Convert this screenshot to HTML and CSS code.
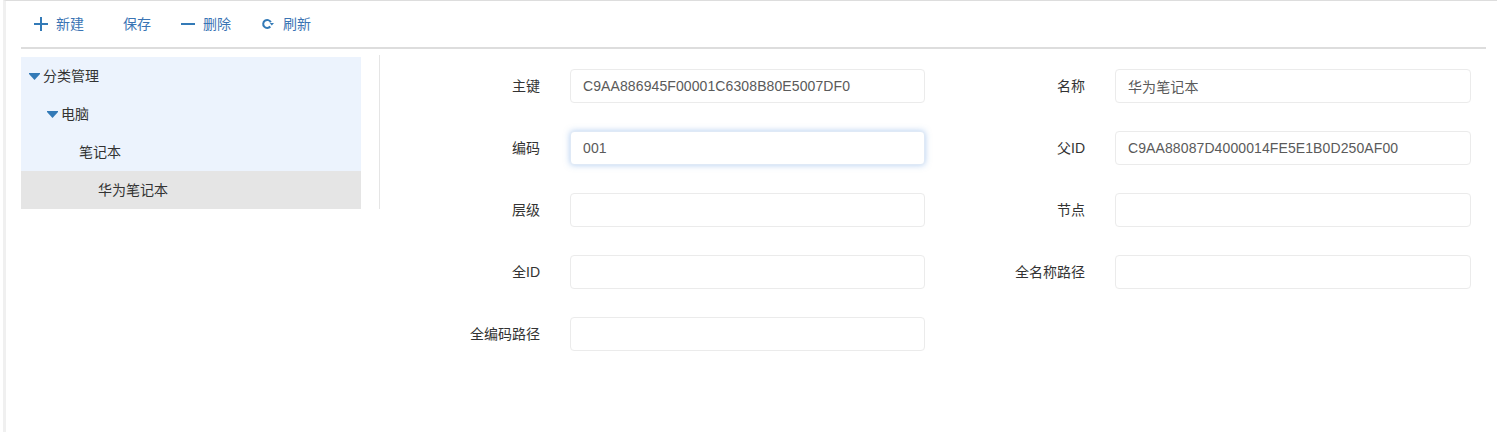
FILE: index.html
```html
<!DOCTYPE html>
<html lang="zh-CN">
<head>
<meta charset="utf-8">
<title>分类管理</title>
<link rel="stylesheet" href="styles.css">
</head>
<body>
<div class="frame">
  <div class="toolbar">
    <a class="tool tool-new"><svg class="ico" width="14" height="14" viewBox="0 0 14 14"><path d="M6 0h2v6h6v2H8v6H6V8H0V6h6z"/></svg><span>新建</span></a>
    <a class="tool tool-save"><span>保存</span></a>
    <a class="tool tool-del"><svg class="ico" width="14" height="14" viewBox="0 0 14 14"><path d="M0 6h14v2H0z"/></svg><span>删除</span></a>
    <a class="tool tool-ref"><svg class="ico" width="12" height="12" viewBox="0 0 12 12"><path class="ring" d="M8.800 4.200A4 4 0 1 0 8.300 8.500"/><path d="M7.700 5h4.300L9.800 7.500z"/></svg><span>刷新</span></a>
  </div>
  <div class="content">
    <div class="tree-pane">
      <ul class="tree">
        <li class="node open"><svg class="caret" width="11" height="7" viewBox="0 0 11 7"><path d="M0 0h11v1L5.500 7 0 1z"/></svg><span>分类管理</span></li>
        <li class="node open lvl1"><svg class="caret" width="11" height="7" viewBox="0 0 11 7"><path d="M0 0h11v1L5.500 7 0 1z"/></svg><span>电脑</span></li>
        <li class="node open lvl2"><span>笔记本</span></li>
        <li class="node selected lvl3"><span>华为笔记本</span></li>
      </ul>
    </div>
    <form class="form">
      <label class="lab">主键</label><input class="inp" value="C9AA886945F00001C6308B80E5007DF0">
      <label class="lab">名称</label><input class="inp" value="华为笔记本">
      <label class="lab">编码</label><input class="inp focus" value="001">
      <label class="lab">父ID</label><input class="inp" value="C9AA88087D4000014FE5E1B0D250AF00">
      <label class="lab">层级</label><input class="inp">
      <label class="lab">节点</label><input class="inp">
      <label class="lab">全ID</label><input class="inp">
      <label class="lab">全名称路径</label><input class="inp">
      <label class="lab">全编码路径</label><input class="inp">
    </form>
  </div>
</div>
</body>
</html>
```
FILE: styles.css
```css
* { box-sizing: border-box; }
html, body { margin: 0; height: 100%; background: #fff; overflow: hidden; }
body {
  padding-left: 3px;
  font: 14px/20px "Liberation Sans", "Noto Sans CJK SC", sans-serif;
  color: #333;
}
.frame {
  height: 432px;
  border-top: 1px solid #ddd;
  border-left: 3px solid #f0f0f0;
  padding: 0 11px 0 15px;
}
.toolbar {
  display: flex;
  align-items: center;
  height: 48px;
  padding-left: 13px;
  border-bottom: 2px solid #ddd;
}
.tool { display: flex; align-items: center; color: #3a74b4; }
.tool .ico { fill: #337ab7; margin-right: 8px; overflow: visible; }
.tool .ico .ring { fill: none; stroke: #337ab7; stroke-width: 2; }
.tool-new { width: 89px; }
.tool-save { width: 58px; }
.tool-del { width: 81px; }
.tool-ref .ico { margin-right: 9px; }
.content { display: flex; padding-top: 6px; }
.tree-pane {
  width: 359px;
  height: 154px;
  padding: 2px 18px 0 0;
  border-right: 1px solid #e5e5e5;
  flex: none;
}
.tree { list-style: none; margin: 0; padding: 0; }
.node {
  display: flex;
  align-items: center;
  height: 38px;
  padding-left: 8px;
  background: #ecf3fd;
  color: #333;
}
.caret { fill: #337ab7; margin-right: 3px; }
.lvl1 { padding-left: 26px; }
.lvl2 { padding-left: 58px; }
.lvl3 { padding-left: 77px; }
.selected { background: #e5e5e5; }
.form {
  flex: 1;
  display: grid;
  grid-template-columns: 190px 355px 190px 356px;
  grid-auto-rows: 34px;
  row-gap: 28px;
  align-content: start;
  padding-top: 14px;
}
.lab { padding-right: 30px; text-align: right; line-height: 34px; color: #333; }
.inp {
  width: 100%;
  height: 34px;
  padding: 0 12px;
  border: 1px solid #ebebeb;
  border-radius: 4px;
  font: inherit;
  letter-spacing: .1px;
  color: #5a5a5a;
  background: #fff;
  outline: 0;
}
.focus {
  border-color: #dfe9f6;
  box-shadow: 0 0 6px rgba(102, 155, 225, .5);
}
```
